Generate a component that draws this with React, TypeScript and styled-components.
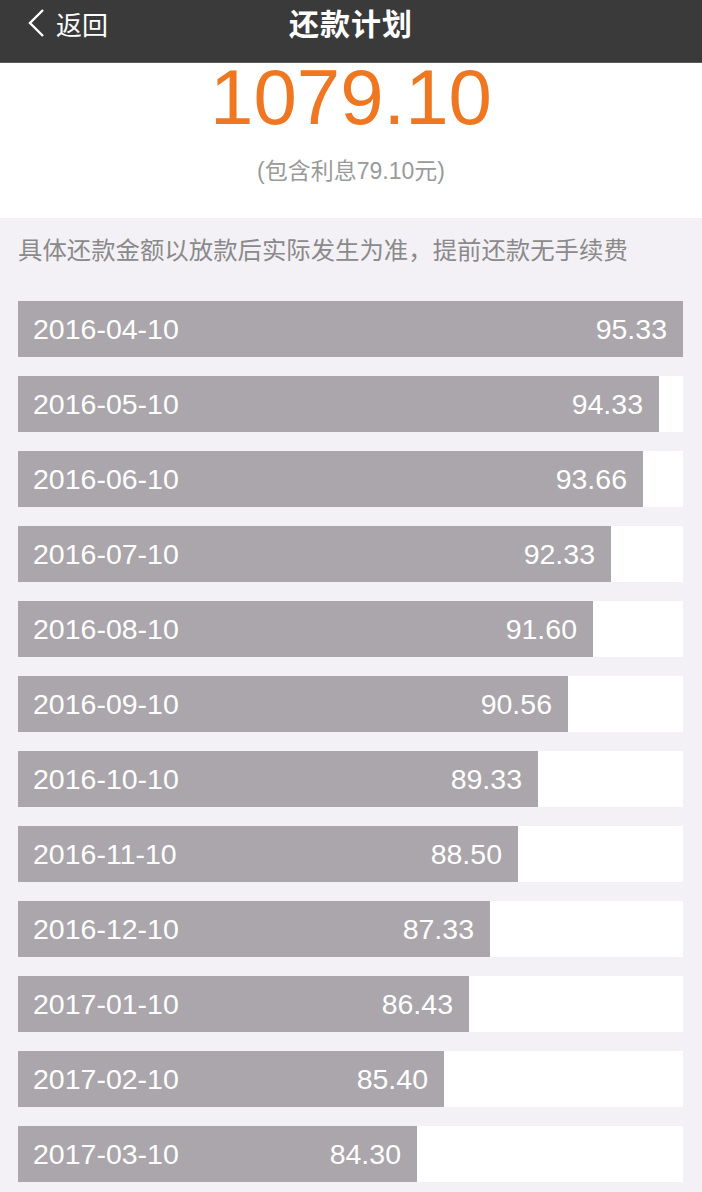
import React from "react";
import styled, { createGlobalStyle } from "styled-components";

const GlobalStyle = createGlobalStyle`
  html, body {
    margin: 0;
    padding: 0;
    background: #f4f1f6;
  }
  body {
    font-family: "Liberation Sans", "Noto Sans CJK SC", sans-serif;
  }
`;

const Page = styled.div`
  width: 702px;
  height: 1192px;
  overflow: hidden;
  background: #f4f1f6;
`;

const NavBar = styled.div`
  height: 63px;
  background: #3a3a3a;
  border-bottom: 1px solid #5a5a5a;
  display: flex;
  align-items: center;
  justify-content: center;
  position: relative;
  box-sizing: border-box;
`;

const BackButton = styled.div`
  position: absolute;
  left: 26px;
  top: 0;
  height: 46px;
  display: flex;
  align-items: center;
  gap: 10px;
  color: #fff;
  font-size: 26px;
`;

const Title = styled.div`
  color: #fff;
  font-size: 30px;
  font-weight: bold;
  margin-top: -18px;
  letter-spacing: 1px;
`;

const Summary = styled.div`
  background: #fff;
  height: 155px;
  display: flex;
  flex-direction: column;
  align-items: center;
`;

const Total = styled.div`
  color: #ef7722;
  font-size: 78px;
  line-height: 1;
  margin-top: -5px;
`;

const Interest = styled.div`
  color: #9a9a9a;
  font-size: 23px;
  margin-top: 16px;
`;

const Note = styled.div`
  color: #8a8a8a;
  font-size: 24.4px;
  padding: 13px 18px 0;
  height: 68px;
  box-sizing: border-box;
`;

const List = styled.div`
  display: flex;
  flex-direction: column;
  gap: 19px;
  padding: 15px 19px 0 18px;
`;

const Track = styled.div`
  height: 56px;
  background: #fff;
`;

const Bar = styled.div`
  height: 100%;
  background: #aaa6ab;
  display: flex;
  align-items: center;
  justify-content: space-between;
  padding: 0 16px 0 15px;
  box-sizing: border-box;
  color: #fff;
  font-size: 28.5px;
`;

const plan = [
  { date: "2016-04-10", amount: "95.33", width: 665 },
  { date: "2016-05-10", amount: "94.33", width: 641 },
  { date: "2016-06-10", amount: "93.66", width: 625 },
  { date: "2016-07-10", amount: "92.33", width: 593 },
  { date: "2016-08-10", amount: "91.60", width: 575 },
  { date: "2016-09-10", amount: "90.56", width: 550 },
  { date: "2016-10-10", amount: "89.33", width: 520 },
  { date: "2016-11-10", amount: "88.50", width: 500 },
  { date: "2016-12-10", amount: "87.33", width: 472 },
  { date: "2017-01-10", amount: "86.43", width: 451 },
  { date: "2017-02-10", amount: "85.40", width: 426 },
  { date: "2017-03-10", amount: "84.30", width: 399 },
];

const App = () => {
  return (
    <Page>
      <GlobalStyle />
      <NavBar>
        <BackButton>
          <svg width="20" height="30" viewBox="0 0 20 30">
            <path d="M17 2 L4 15 L17 28" fill="none" stroke="#fff" strokeWidth="2.4" />
          </svg>
          返回
        </BackButton>
        <Title>还款计划</Title>
      </NavBar>
      <Summary>
        <Total>1079.10</Total>
        <Interest>(包含利息79.10元)</Interest>
      </Summary>
      <Note>具体还款金额以放款后实际发生为准，提前还款无手续费</Note>
      <List>
        {plan.map((p) => (
          <Track key={p.date}>
            <Bar style={{ width: (p.width / 665) * 100 + "%" }}>
              <span>{p.date}</span>
              <span>{p.amount}</span>
            </Bar>
          </Track>
        ))}
      </List>
    </Page>
  );
};

export default App;
